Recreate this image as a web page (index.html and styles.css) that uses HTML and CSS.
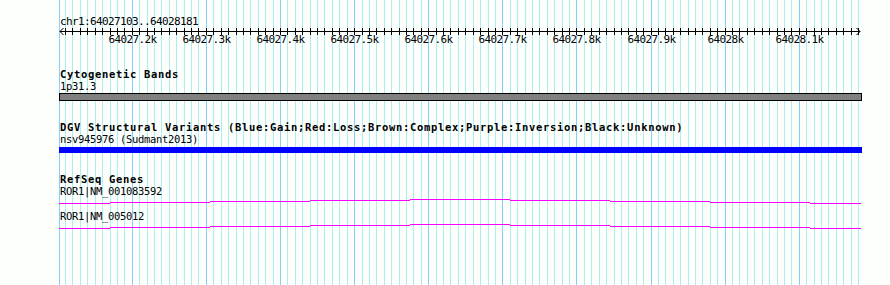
FILE: index.html
```html
<!DOCTYPE html>
<html lang="en">
<head>
    <meta charset="UTF-8">
    <meta name="viewport" content="width=device-width, initial-scale=1.0">
    <title>chr1:64027103..64028181</title>
    <link rel="stylesheet" href="styles.css">
</head>
<body>
    <div class="browser">
        <svg class="grid" id="grid" width="890" height="285"></svg>

        <div class="panel">
            <svg class="ruler" id="ruler" width="890" height="48">
                <text class="ruler-text" x="60" y="25">chr1:64027103..64028181</text>
                <path class="ruler-line" d="M60 31.5 H860 M63.5 28 L60 31.5 L63.5 35 M856.5 28 L860 31.5 L856.5 35"></path>
            </svg>

            <section class="track">
                <div class="track-title">Cytogenetic Bands</div>
                <div class="feature-label">1p31.3</div>
                <div class="band"></div>
            </section>

            <section class="track">
                <div class="track-title">DGV Structural Variants (Blue:Gain;Red:Loss;Brown:Complex;Purple:Inversion;Black:Unknown)</div>
                <div class="feature-label">nsv945976 (Sudmant2013)</div>
                <div class="variant"></div>
            </section>

            <section class="track">
                <div class="track-title">RefSeq Genes</div>
                <div class="feature-label">ROR1|NM_001083592</div>
                <svg class="gene" width="803" height="7">
                    <path d="M0 5.5 H51 M51 4.5 H151 M151 3.5 H251 M251 2.5 H351 M351 1.5 H451 M451 2.5 H551 M551 3.5 H651 M651 4.5 H751 M751 5.5 H802"></path>
                </svg>
                <div class="feature-label gap">ROR1|NM_005012</div>
                <svg class="gene" width="803" height="7">
                    <path d="M0 5.5 H51 M51 4.5 H151 M151 3.5 H251 M251 2.5 H351 M351 1.5 H451 M451 2.5 H551 M551 3.5 H651 M651 4.5 H751 M751 5.5 H802"></path>
                </svg>
            </section>
        </div>
    </div>

    <script>
        var start = 64027103;
        var end = 64028181;
        var origin = 60.4;
        var scale = 0.7411;
        var ns = 'http://www.w3.org/2000/svg';

        function xFor(pos) {
            return Math.floor(origin + (pos - start) * scale);
        }

        function vline(svg, x, cls) {
            var line = document.createElementNS(ns, 'line');
            line.setAttribute('class', cls);
            line.setAttribute('x1', x);
            line.setAttribute('x2', x);
            line.setAttribute('y1', 0);
            line.setAttribute('y2', 285);
            svg.appendChild(line);
        }

        var grid = document.getElementById('grid');
        var ruler = document.getElementById('ruler');

        // left edge of the track area
        vline(grid, 59.5, 'major');

        var ticks = '';
        for (var pos = 64027110; pos < end; pos += 10) {
            var x = xFor(pos) + 0.5;
            var major = pos % 100 === 0;

            vline(grid, x, major ? 'major' : 'minor');
            ticks += 'M' + x + ' 28 V35 ';

            if (major) {
                var label = document.createElementNS(ns, 'text');
                label.setAttribute('class', 'ruler-text');
                label.setAttribute('x', x);
                label.setAttribute('y', 43);
                label.setAttribute('text-anchor', 'middle');
                label.textContent = (pos / 1000) + 'k';
                ruler.appendChild(label);
            }
        }

        var tickPath = document.createElementNS(ns, 'path');
        tickPath.setAttribute('class', 'ruler-line');
        tickPath.setAttribute('d', ticks);
        ruler.appendChild(tickPath);
    </script>
</body>
</html>
```

FILE: styles.css
```css
body {
    margin: 0;
    padding: 0;
    background-color: #fdfffd;
    font-family: 'DejaVu Sans Mono', 'Liberation Mono', monospace;
    font-size: 10.5px;
    color: #000;
}
.browser {
    position: relative;
    width: 890px;
    height: 285px;
    overflow: hidden;
}
.grid {
    position: absolute;
    top: 0;
    left: 0;
}
.grid .minor {
    stroke: #afeeee;
    stroke-width: 1;
}
.grid .major {
    stroke: #87cefa;
    stroke-width: 1;
}
.panel {
    position: relative;
}
.ruler {
    display: block;
}
.ruler-text {
    font-family: 'DejaVu Sans Mono', 'Liberation Mono', monospace;
    font-size: 11px;
    letter-spacing: -0.62px;
    fill: #000;
}
.ruler-line {
    stroke: #000;
    stroke-width: 1;
    fill: none;
}
.track {
    padding-top: 20px;
    padding-left: 59px;
}
.track-title, .feature-label {
    padding-left: 1px;
    height: 12px;
    line-height: 12px;
    white-space: nowrap;
}
.track-title {
    font-weight: bold;
    letter-spacing: 0.68px;
}
.feature-label {
    letter-spacing: -0.32px;
}
.feature-label.gap {
    margin-top: 5px;
}
.band {
    width: 801px;
    height: 6px;
    margin-top: 1px;
    background-color: #808080;
    border: 1px solid #000;
}
.variant {
    width: 803px;
    height: 6px;
    margin-top: 2px;
    background-color: #0000ff;
}
.gene {
    display: block;
    margin-top: 1px;
}
.gene path {
    stroke: #ff00ff;
    stroke-width: 1;
    fill: none;
}
```
